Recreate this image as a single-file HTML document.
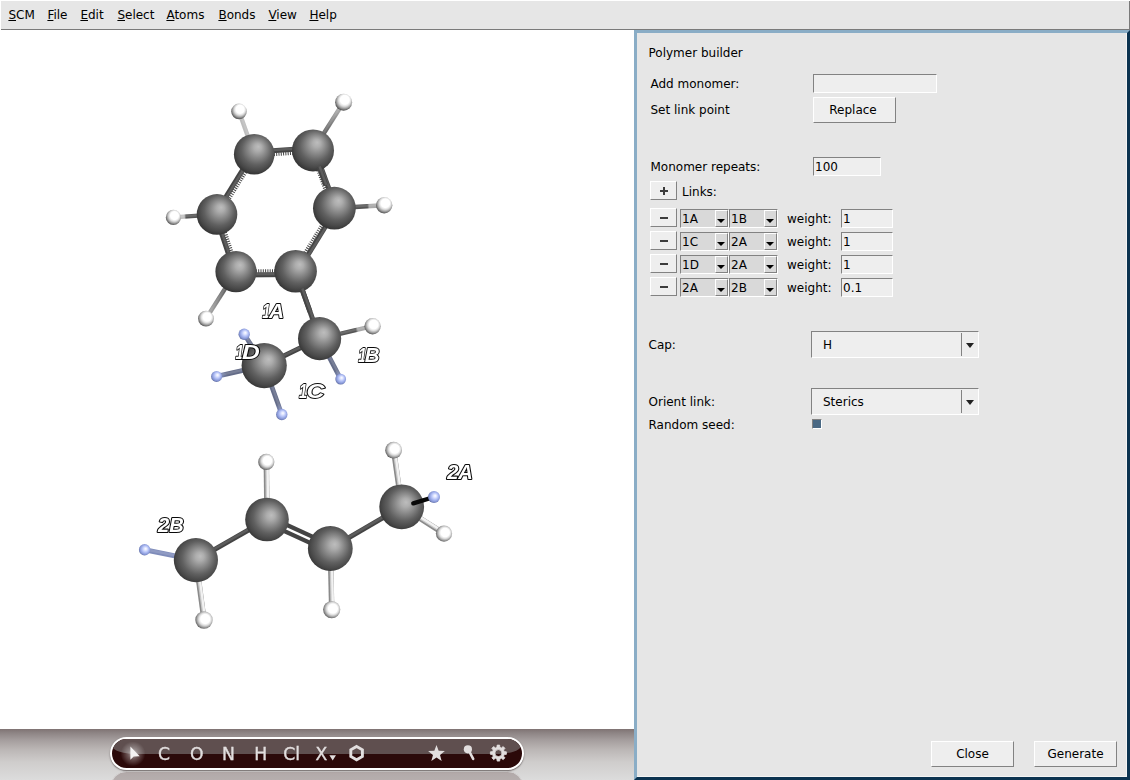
<!DOCTYPE html><html><head><meta charset="utf-8"><title>Polymer builder</title><style>
*{box-sizing:border-box;margin:0;padding:0}
html,body{width:1130px;height:780px;overflow:hidden;background:#fff}
body{position:relative;font-family:"DejaVu Sans","Liberation Sans",sans-serif;font-size:12px;color:#000}
.abs{position:absolute}
#menubar{left:1px;top:1px;width:1129px;height:29px;background:#e6e6e6;border-bottom:1px solid #7a7a7a;border-right:1px solid #7a7a7a}
#menubar span{position:absolute;top:7px;line-height:14px;white-space:nowrap}
#menubar u{text-decoration:underline;text-underline-offset:1px}
#panel{left:634px;top:30px;width:496px;height:750px;background:#e6e6e6;border-style:solid;border-width:3px;border-color:#8aadc6 #0c3350 #0c3350 #8aadc6}
#panel:after{content:"";position:absolute;left:0;top:0;right:0;bottom:0;border-right:1px solid #f4f4f4;border-bottom:1px solid #f4f4f4}
.lbl{position:absolute;white-space:nowrap;line-height:14px}
.entry{position:absolute;background:#eeeeee;border:1px solid;border-color:#828282 #fff #fff #828282;line-height:14px;white-space:nowrap;overflow:hidden}
.btn{position:absolute;background:#eeeeee;border:1px solid;border-color:#fff #828282 #828282 #fff;text-align:center;white-space:nowrap}
.cb{position:absolute;background:#d9d9d9;border:1px solid;border-color:#828282 #fff #fff #828282;height:19px;line-height:14px;white-space:nowrap}
.cb .t{position:absolute;left:1px;top:2px}
.cb .ar{position:absolute;right:0;top:0;width:13px;height:17px;background:#d9d9d9;border:1px solid;border-color:#fff #828282 #828282 #fff}
.cb .ar:before{content:"";position:absolute;left:1px;top:8px;border:4px solid transparent;border-top:4.5px solid #000;border-bottom:none}
.pm{position:absolute;background:#3c3c3c}
.opt{position:absolute;background:#eeeeee;border:1px solid;border-color:#828282 #fff #fff #828282;width:168px;height:27px;line-height:14px}
.opt .t{position:absolute;left:11px;top:6px}
.opt .dv{position:absolute;left:149px;top:1px;width:1px;height:23px;background:#828282}
.opt .tr{position:absolute;left:154px;top:11px;border:4px solid transparent;border-top:5px solid #222;border-bottom:none}
#bar{left:0;top:729px;width:634px;height:51px;background:linear-gradient(#7f7373 0,#8e8585 8%,#a59e9e 22%,#bbb6b5 40%,#cfcdcc 65%,#dcdcdc 100%)}
#pill{left:110px;top:736.5px;width:414px;height:33.5px;border-radius:17px;border:2.5px solid #fff;background:#2b0909;overflow:hidden;box-shadow:0 1px 1.5px rgba(40,30,30,.6)}
#pill .gl{position:absolute;left:0;top:-10px;width:409px;height:25.2px;background:#5f4f4f;border-radius:0 0 26px 26px/0 0 8px 8px}
#refl{left:110px;top:770.5px;width:414px;height:33.5px;border-radius:17px;border:1.5px solid #cfc6c6;background:#32100f;opacity:.22}
</style></head><body>
<div id="menubar" class="abs">
<span style="left:7.4px"><u>S</u>CM</span>
<span style="left:46.4px"><u>F</u>ile</span>
<span style="left:79.4px"><u>E</u>dit</span>
<span style="left:116.4px"><u>S</u>elect</span>
<span style="left:165.4px"><u>A</u>toms</span>
<span style="left:217.4px"><u>B</u>onds</span>
<span style="left:267.4px"><u>V</u>iew</span>
<span style="left:308.4px"><u>H</u>elp</span>
</div>
<svg width="634" height="699" viewBox="0 30 634 699" style="position:absolute;left:0;top:30px;will-change:transform" stroke-linecap="butt">
<line x1="271.6" y1="154.6" x2="295.1" y2="153.1" stroke="#444" stroke-width="3.4" stroke-dasharray="1.0 1.3"/>
<line x1="247.0" y1="170.1" x2="228.0" y2="200.8" stroke="#444" stroke-width="3.4" stroke-dasharray="1.0 1.3"/>
<line x1="224.5" y1="230.1" x2="232.5" y2="254.2" stroke="#444" stroke-width="3.4" stroke-dasharray="1.0 1.3"/>
<line x1="253.6" y1="271.0" x2="277.3" y2="270.8" stroke="#444" stroke-width="3.4" stroke-dasharray="1.0 1.3"/>
<line x1="303.7" y1="254.7" x2="323.2" y2="222.9" stroke="#444" stroke-width="3.4" stroke-dasharray="1.0 1.3"/>
<line x1="317.2" y1="168.0" x2="325.9" y2="191.7" stroke="#444" stroke-width="3.4" stroke-dasharray="1.0 1.3"/>
<g transform="translate(-0.15,-2.30)"><line x1="254.2" y1="154.2" x2="313.0" y2="150.4" stroke="#444" stroke-width="5.0"/><line x1="254.2" y1="153.6" x2="313.0" y2="149.8" stroke="#fff" stroke-opacity="0.13" stroke-width="2.5"/></g>
<g transform="translate(-1.36,-0.84)"><line x1="254.2" y1="154.2" x2="217.0" y2="214.4" stroke="#444" stroke-width="5.0"/><line x1="254.7" y1="154.5" x2="217.5" y2="214.7" stroke="#fff" stroke-opacity="0.13" stroke-width="2.5"/></g>
<g transform="translate(-1.52,0.50)"><line x1="217.0" y1="214.4" x2="236.0" y2="271.6" stroke="#444" stroke-width="5.0"/><line x1="217.6" y1="214.2" x2="236.6" y2="271.4" stroke="#fff" stroke-opacity="0.13" stroke-width="2.5"/></g>
<g transform="translate(0.02,3.30)"><line x1="236.0" y1="271.6" x2="295.6" y2="271.2" stroke="#444" stroke-width="5.0"/><line x1="236.0" y1="271.0" x2="295.6" y2="270.6" stroke="#fff" stroke-opacity="0.13" stroke-width="2.5"/></g>
<g transform="translate(1.70,1.05)"><line x1="295.6" y1="271.2" x2="334.4" y2="208.2" stroke="#444" stroke-width="5.0"/><line x1="296.1" y1="271.5" x2="334.9" y2="208.5" stroke="#fff" stroke-opacity="0.13" stroke-width="2.5"/></g>
<g transform="translate(1.50,-0.56)"><line x1="313.0" y1="150.4" x2="334.4" y2="208.2" stroke="#444" stroke-width="5.0"/><line x1="313.6" y1="150.2" x2="335.0" y2="208.0" stroke="#fff" stroke-opacity="0.13" stroke-width="2.5"/></g>
<line x1="295.6" y1="271.2" x2="319.6" y2="338.6" stroke="#444" stroke-width="5.0"/><line x1="296.2" y1="271.0" x2="320.2" y2="338.4" stroke="#fff" stroke-opacity="0.13" stroke-width="2.5"/>
<line x1="319.6" y1="338.6" x2="264.2" y2="365.6" stroke="#444" stroke-width="5.0"/><line x1="319.3" y1="338.1" x2="263.9" y2="365.1" stroke="#fff" stroke-opacity="0.13" stroke-width="2.5"/>
<linearGradient id="lg1" gradientUnits="userSpaceOnUse" x1="254.2" y1="154.2" x2="239.0" y2="111.4"><stop offset="0.3" stop-color="#555"/><stop offset="0.33999999999999997" stop-color="#bdbdbd"/></linearGradient><line x1="254.2" y1="154.2" x2="239.0" y2="111.4" stroke="url(#lg1)" stroke-width="4.4"/><line x1="254.7" y1="154.0" x2="239.5" y2="111.2" stroke="#fff" stroke-opacity="0.13" stroke-width="2.2"/>
<linearGradient id="lg2" gradientUnits="userSpaceOnUse" x1="313.0" y1="150.4" x2="343.6" y2="102.2"><stop offset="0.4" stop-color="#666"/><stop offset="0.8" stop-color="#a2a2a2"/></linearGradient><line x1="313.0" y1="150.4" x2="343.6" y2="102.2" stroke="url(#lg2)" stroke-width="4.4"/><line x1="312.6" y1="150.1" x2="343.2" y2="101.9" stroke="#fff" stroke-opacity="0.13" stroke-width="2.2"/>
<linearGradient id="lg3" gradientUnits="userSpaceOnUse" x1="217.0" y1="214.4" x2="173.4" y2="217.4"><stop offset="0.71" stop-color="#555"/><stop offset="0.75" stop-color="#c0c0c0"/></linearGradient><line x1="217.0" y1="214.4" x2="173.4" y2="217.4" stroke="url(#lg3)" stroke-width="4.4"/><line x1="217.0" y1="213.9" x2="173.4" y2="216.9" stroke="#fff" stroke-opacity="0.13" stroke-width="2.2"/>
<linearGradient id="lg4" gradientUnits="userSpaceOnUse" x1="334.4" y1="208.2" x2="384.2" y2="205.2"><stop offset="0.66" stop-color="#555"/><stop offset="0.7000000000000001" stop-color="#a8a8a8"/></linearGradient><line x1="334.4" y1="208.2" x2="384.2" y2="205.2" stroke="url(#lg4)" stroke-width="4.4"/><line x1="334.4" y1="207.7" x2="384.2" y2="204.7" stroke="#fff" stroke-opacity="0.13" stroke-width="2.2"/>
<linearGradient id="lg5" gradientUnits="userSpaceOnUse" x1="236.0" y1="271.6" x2="206.0" y2="318.6"><stop offset="0.4" stop-color="#666"/><stop offset="0.8" stop-color="#9c9c9c"/></linearGradient><line x1="236.0" y1="271.6" x2="206.0" y2="318.6" stroke="url(#lg5)" stroke-width="4.4"/><line x1="235.6" y1="271.3" x2="205.6" y2="318.3" stroke="#fff" stroke-opacity="0.13" stroke-width="2.2"/>
<linearGradient id="lg6" gradientUnits="userSpaceOnUse" x1="319.6" y1="338.6" x2="372.6" y2="326.2"><stop offset="0.68" stop-color="#555"/><stop offset="0.7200000000000001" stop-color="#a8a8a8"/></linearGradient><line x1="319.6" y1="338.6" x2="372.6" y2="326.2" stroke="url(#lg6)" stroke-width="4.4"/><line x1="319.5" y1="338.1" x2="372.5" y2="325.7" stroke="#fff" stroke-opacity="0.13" stroke-width="2.2"/>
<linearGradient id="lg7" gradientUnits="userSpaceOnUse" x1="264.2" y1="365.6" x2="244.2" y2="334.3"><stop offset="0.78" stop-color="#646c88"/><stop offset="0.93" stop-color="#7f8cba"/></linearGradient><line x1="264.2" y1="365.6" x2="244.2" y2="334.3" stroke="url(#lg7)" stroke-width="4.8"/><line x1="264.7" y1="365.3" x2="244.7" y2="334.0" stroke="#fff" stroke-opacity="0.13" stroke-width="2.4"/>
<linearGradient id="lg8" gradientUnits="userSpaceOnUse" x1="264.2" y1="365.6" x2="216.6" y2="376.4"><stop offset="0.78" stop-color="#646c88"/><stop offset="0.93" stop-color="#7f8cba"/></linearGradient><line x1="264.2" y1="365.6" x2="216.6" y2="376.4" stroke="url(#lg8)" stroke-width="4.8"/><line x1="264.1" y1="365.0" x2="216.5" y2="375.8" stroke="#fff" stroke-opacity="0.13" stroke-width="2.4"/>
<linearGradient id="lg9" gradientUnits="userSpaceOnUse" x1="264.2" y1="365.6" x2="281.8" y2="414.5"><stop offset="0.78" stop-color="#646c88"/><stop offset="0.93" stop-color="#7f8cba"/></linearGradient><line x1="264.2" y1="365.6" x2="281.8" y2="414.5" stroke="url(#lg9)" stroke-width="4.8"/><line x1="264.7" y1="365.4" x2="282.3" y2="414.3" stroke="#fff" stroke-opacity="0.13" stroke-width="2.4"/>
<linearGradient id="lg10" gradientUnits="userSpaceOnUse" x1="319.6" y1="338.6" x2="340.7" y2="379.1"><stop offset="0.78" stop-color="#646c88"/><stop offset="0.93" stop-color="#7f8cba"/></linearGradient><line x1="319.6" y1="338.6" x2="340.7" y2="379.1" stroke="url(#lg10)" stroke-width="4.8"/><line x1="320.1" y1="338.3" x2="341.2" y2="378.8" stroke="#fff" stroke-opacity="0.13" stroke-width="2.4"/>
<line x1="195.9" y1="560.1" x2="267.0" y2="519.5" stroke="#444" stroke-width="5.0"/><line x1="195.6" y1="559.6" x2="266.7" y2="519.0" stroke="#fff" stroke-opacity="0.13" stroke-width="2.5"/>
<line x1="330.3" y1="548.5" x2="401.7" y2="506.8" stroke="#444" stroke-width="5.0"/><line x1="330.0" y1="548.0" x2="401.4" y2="506.3" stroke="#fff" stroke-opacity="0.13" stroke-width="2.5"/>
<line x1="268.4" y1="516.5" x2="331.7" y2="545.5" stroke="#444" stroke-width="4.2"/>
<line x1="265.6" y1="522.5" x2="328.9" y2="551.5" stroke="#444" stroke-width="4.2"/>
<line x1="267.0" y1="519.5" x2="266.3" y2="461.9" stroke="#8a8a8a" stroke-width="5.4"/>
<line x1="267.7" y1="519.5" x2="267.0" y2="461.9" stroke="#c8c8c8" stroke-width="3.6"/>
<line x1="268.3" y1="519.5" x2="267.6" y2="461.9" stroke="#f2f2f2" stroke-width="2.2"/>
<line x1="195.9" y1="560.1" x2="204.0" y2="620.0" stroke="#8a8a8a" stroke-width="5.4"/>
<line x1="196.6" y1="560.0" x2="204.7" y2="619.9" stroke="#c8c8c8" stroke-width="3.6"/>
<line x1="197.2" y1="559.9" x2="205.3" y2="619.8" stroke="#f2f2f2" stroke-width="2.2"/>
<line x1="330.3" y1="548.5" x2="331.7" y2="609.6" stroke="#8a8a8a" stroke-width="5.4"/>
<line x1="331.0" y1="548.5" x2="332.4" y2="609.6" stroke="#c8c8c8" stroke-width="3.6"/>
<line x1="331.6" y1="548.5" x2="333.0" y2="609.6" stroke="#f2f2f2" stroke-width="2.2"/>
<line x1="401.7" y1="506.8" x2="393.6" y2="450.2" stroke="#8a8a8a" stroke-width="5.4"/>
<line x1="402.4" y1="506.7" x2="394.3" y2="450.1" stroke="#c8c8c8" stroke-width="3.6"/>
<line x1="403.0" y1="506.6" x2="394.9" y2="450.0" stroke="#f2f2f2" stroke-width="2.2"/>
<line x1="401.7" y1="506.8" x2="444.0" y2="533.6" stroke="#8a8a8a" stroke-width="5.4"/>
<line x1="402.1" y1="506.2" x2="444.4" y2="533.0" stroke="#c8c8c8" stroke-width="3.6"/>
<line x1="402.4" y1="505.7" x2="444.7" y2="532.5" stroke="#f2f2f2" stroke-width="2.2"/>
<line x1="195.9" y1="560.1" x2="144.6" y2="549.8" stroke="#7f8cba" stroke-width="5.0"/><line x1="196.0" y1="559.5" x2="144.7" y2="549.2" stroke="#fff" stroke-opacity="0.13" stroke-width="2.5"/>
<radialGradient id="s16" cx="0.535" cy="0.436" r="0.6" fx="0.600" fy="0.300"><stop offset="0" stop-color="#fff"/><stop offset="0.44" stop-color="#fff"/><stop offset="0.6" stop-color="#dedede"/><stop offset="0.76" stop-color="#a4a4a4"/><stop offset="0.9" stop-color="#666"/><stop offset="1" stop-color="#383838"/></radialGradient><circle cx="239.0" cy="111.4" r="7.8" fill="url(#s16)"/>
<radialGradient id="s17" cx="0.535" cy="0.435" r="0.6" fx="0.600" fy="0.298"><stop offset="0" stop-color="#fff"/><stop offset="0.44" stop-color="#fff"/><stop offset="0.6" stop-color="#dedede"/><stop offset="0.76" stop-color="#a4a4a4"/><stop offset="0.9" stop-color="#666"/><stop offset="1" stop-color="#383838"/></radialGradient><circle cx="343.6" cy="102.2" r="8.5" fill="url(#s17)"/>
<radialGradient id="s18" cx="0.535" cy="0.444" r="0.6" fx="0.600" fy="0.326"><stop offset="0" stop-color="#fff"/><stop offset="0.44" stop-color="#fff"/><stop offset="0.6" stop-color="#dedede"/><stop offset="0.76" stop-color="#a4a4a4"/><stop offset="0.9" stop-color="#666"/><stop offset="1" stop-color="#383838"/></radialGradient><circle cx="173.4" cy="217.4" r="7.6" fill="url(#s18)"/>
<radialGradient id="s19" cx="0.535" cy="0.443" r="0.6" fx="0.600" fy="0.323"><stop offset="0" stop-color="#fff"/><stop offset="0.44" stop-color="#fff"/><stop offset="0.6" stop-color="#dedede"/><stop offset="0.76" stop-color="#a4a4a4"/><stop offset="0.9" stop-color="#666"/><stop offset="1" stop-color="#383838"/></radialGradient><circle cx="384.2" cy="205.2" r="8.2" fill="url(#s19)"/>
<radialGradient id="s20" cx="0.535" cy="0.453" r="0.6" fx="0.600" fy="0.352"><stop offset="0" stop-color="#fff"/><stop offset="0.44" stop-color="#fff"/><stop offset="0.6" stop-color="#dedede"/><stop offset="0.76" stop-color="#a4a4a4"/><stop offset="0.9" stop-color="#666"/><stop offset="1" stop-color="#383838"/></radialGradient><circle cx="206.0" cy="318.6" r="7.9" fill="url(#s20)"/>
<radialGradient id="s21" cx="0.535" cy="0.453" r="0.6" fx="0.600" fy="0.354"><stop offset="0" stop-color="#fff"/><stop offset="0.44" stop-color="#fff"/><stop offset="0.6" stop-color="#dedede"/><stop offset="0.76" stop-color="#a4a4a4"/><stop offset="0.9" stop-color="#666"/><stop offset="1" stop-color="#383838"/></radialGradient><circle cx="372.6" cy="326.2" r="8.2" fill="url(#s21)"/>
<radialGradient id="s22" cx="0.535" cy="0.454" r="0.6" fx="0.600" fy="0.356"><stop offset="0" stop-color="#fff"/><stop offset="0.22" stop-color="#dfe5ff"/><stop offset="0.5" stop-color="#aebcf4"/><stop offset="0.78" stop-color="#8393d2"/><stop offset="1" stop-color="#4f5b8a"/></radialGradient><circle cx="244.2" cy="334.3" r="5.7" fill="url(#s22)"/>
<radialGradient id="s23" cx="0.535" cy="0.457" r="0.6" fx="0.600" fy="0.366"><stop offset="0" stop-color="#fff"/><stop offset="0.22" stop-color="#dfe5ff"/><stop offset="0.5" stop-color="#aebcf4"/><stop offset="0.78" stop-color="#8393d2"/><stop offset="1" stop-color="#4f5b8a"/></radialGradient><circle cx="216.6" cy="376.4" r="5.5" fill="url(#s23)"/>
<radialGradient id="s24" cx="0.535" cy="0.460" r="0.6" fx="0.600" fy="0.376"><stop offset="0" stop-color="#fff"/><stop offset="0.22" stop-color="#dfe5ff"/><stop offset="0.5" stop-color="#aebcf4"/><stop offset="0.78" stop-color="#8393d2"/><stop offset="1" stop-color="#4f5b8a"/></radialGradient><circle cx="281.8" cy="414.5" r="5.7" fill="url(#s24)"/>
<radialGradient id="s25" cx="0.535" cy="0.457" r="0.6" fx="0.600" fy="0.367"><stop offset="0" stop-color="#fff"/><stop offset="0.22" stop-color="#dfe5ff"/><stop offset="0.5" stop-color="#aebcf4"/><stop offset="0.78" stop-color="#8393d2"/><stop offset="1" stop-color="#4f5b8a"/></radialGradient><circle cx="340.7" cy="379.1" r="5.4" fill="url(#s25)"/>
<radialGradient id="s26" cx="0.535" cy="0.439" r="0.6" fx="0.600" fy="0.311"><stop offset="0" stop-color="#bdbdbd"/><stop offset="0.16" stop-color="#adadad"/><stop offset="0.38" stop-color="#888"/><stop offset="0.62" stop-color="#606060"/><stop offset="0.82" stop-color="#484848"/><stop offset="1" stop-color="#2c2c2c"/></radialGradient><circle cx="254.2" cy="154.2" r="20.3" fill="url(#s26)"/>
<radialGradient id="s27" cx="0.535" cy="0.439" r="0.6" fx="0.600" fy="0.310"><stop offset="0" stop-color="#bdbdbd"/><stop offset="0.16" stop-color="#adadad"/><stop offset="0.38" stop-color="#888"/><stop offset="0.62" stop-color="#606060"/><stop offset="0.82" stop-color="#484848"/><stop offset="1" stop-color="#2c2c2c"/></radialGradient><circle cx="313.0" cy="150.4" r="21.0" fill="url(#s27)"/>
<radialGradient id="s28" cx="0.535" cy="0.444" r="0.6" fx="0.600" fy="0.326"><stop offset="0" stop-color="#bdbdbd"/><stop offset="0.16" stop-color="#adadad"/><stop offset="0.38" stop-color="#888"/><stop offset="0.62" stop-color="#606060"/><stop offset="0.82" stop-color="#484848"/><stop offset="1" stop-color="#2c2c2c"/></radialGradient><circle cx="217.0" cy="214.4" r="20.3" fill="url(#s28)"/>
<radialGradient id="s29" cx="0.535" cy="0.444" r="0.6" fx="0.600" fy="0.324"><stop offset="0" stop-color="#bdbdbd"/><stop offset="0.16" stop-color="#adadad"/><stop offset="0.38" stop-color="#888"/><stop offset="0.62" stop-color="#606060"/><stop offset="0.82" stop-color="#484848"/><stop offset="1" stop-color="#2c2c2c"/></radialGradient><circle cx="334.4" cy="208.2" r="21.4" fill="url(#s29)"/>
<radialGradient id="s30" cx="0.535" cy="0.449" r="0.6" fx="0.600" fy="0.340"><stop offset="0" stop-color="#bdbdbd"/><stop offset="0.16" stop-color="#adadad"/><stop offset="0.38" stop-color="#888"/><stop offset="0.62" stop-color="#606060"/><stop offset="0.82" stop-color="#484848"/><stop offset="1" stop-color="#2c2c2c"/></radialGradient><circle cx="236.0" cy="271.6" r="20.6" fill="url(#s30)"/>
<radialGradient id="s31" cx="0.535" cy="0.449" r="0.6" fx="0.600" fy="0.340"><stop offset="0" stop-color="#bdbdbd"/><stop offset="0.16" stop-color="#adadad"/><stop offset="0.38" stop-color="#888"/><stop offset="0.62" stop-color="#606060"/><stop offset="0.82" stop-color="#484848"/><stop offset="1" stop-color="#2c2c2c"/></radialGradient><circle cx="295.6" cy="271.2" r="21.3" fill="url(#s31)"/>
<radialGradient id="s32" cx="0.535" cy="0.454" r="0.6" fx="0.600" fy="0.357"><stop offset="0" stop-color="#bdbdbd"/><stop offset="0.16" stop-color="#adadad"/><stop offset="0.38" stop-color="#888"/><stop offset="0.62" stop-color="#606060"/><stop offset="0.82" stop-color="#484848"/><stop offset="1" stop-color="#2c2c2c"/></radialGradient><circle cx="319.6" cy="338.6" r="21.6" fill="url(#s32)"/>
<radialGradient id="s33" cx="0.535" cy="0.456" r="0.6" fx="0.600" fy="0.363"><stop offset="0" stop-color="#bdbdbd"/><stop offset="0.16" stop-color="#adadad"/><stop offset="0.38" stop-color="#888"/><stop offset="0.62" stop-color="#606060"/><stop offset="0.82" stop-color="#484848"/><stop offset="1" stop-color="#2c2c2c"/></radialGradient><circle cx="264.2" cy="365.6" r="22.6" fill="url(#s33)"/>
<radialGradient id="s34" cx="0.535" cy="0.473" r="0.6" fx="0.600" fy="0.417"><stop offset="0" stop-color="#fff"/><stop offset="0.44" stop-color="#fff"/><stop offset="0.6" stop-color="#dedede"/><stop offset="0.76" stop-color="#a4a4a4"/><stop offset="0.9" stop-color="#666"/><stop offset="1" stop-color="#383838"/></radialGradient><circle cx="204.0" cy="620.0" r="8.7" fill="url(#s34)"/>
<radialGradient id="s35" cx="0.535" cy="0.464" r="0.6" fx="0.600" fy="0.387"><stop offset="0" stop-color="#fff"/><stop offset="0.44" stop-color="#fff"/><stop offset="0.6" stop-color="#dedede"/><stop offset="0.76" stop-color="#a4a4a4"/><stop offset="0.9" stop-color="#666"/><stop offset="1" stop-color="#383838"/></radialGradient><circle cx="266.3" cy="461.9" r="8.1" fill="url(#s35)"/>
<radialGradient id="s36" cx="0.535" cy="0.473" r="0.6" fx="0.600" fy="0.417"><stop offset="0" stop-color="#fff"/><stop offset="0.44" stop-color="#fff"/><stop offset="0.6" stop-color="#dedede"/><stop offset="0.76" stop-color="#a4a4a4"/><stop offset="0.9" stop-color="#666"/><stop offset="1" stop-color="#383838"/></radialGradient><circle cx="331.7" cy="609.6" r="8.6" fill="url(#s36)"/>
<radialGradient id="s37" cx="0.535" cy="0.463" r="0.6" fx="0.600" fy="0.385"><stop offset="0" stop-color="#fff"/><stop offset="0.44" stop-color="#fff"/><stop offset="0.6" stop-color="#dedede"/><stop offset="0.76" stop-color="#a4a4a4"/><stop offset="0.9" stop-color="#666"/><stop offset="1" stop-color="#383838"/></radialGradient><circle cx="393.6" cy="450.2" r="8.4" fill="url(#s37)"/>
<radialGradient id="s38" cx="0.535" cy="0.470" r="0.6" fx="0.600" fy="0.405"><stop offset="0" stop-color="#fff"/><stop offset="0.44" stop-color="#fff"/><stop offset="0.6" stop-color="#dedede"/><stop offset="0.76" stop-color="#a4a4a4"/><stop offset="0.9" stop-color="#666"/><stop offset="1" stop-color="#383838"/></radialGradient><circle cx="444.0" cy="533.6" r="8.1" fill="url(#s38)"/>
<radialGradient id="s39" cx="0.535" cy="0.471" r="0.6" fx="0.600" fy="0.409"><stop offset="0" stop-color="#fff"/><stop offset="0.22" stop-color="#dfe5ff"/><stop offset="0.5" stop-color="#aebcf4"/><stop offset="0.78" stop-color="#8393d2"/><stop offset="1" stop-color="#4f5b8a"/></radialGradient><circle cx="144.6" cy="549.8" r="5.7" fill="url(#s39)"/>
<radialGradient id="s40" cx="0.535" cy="0.472" r="0.6" fx="0.600" fy="0.412"><stop offset="0" stop-color="#bdbdbd"/><stop offset="0.16" stop-color="#adadad"/><stop offset="0.38" stop-color="#888"/><stop offset="0.62" stop-color="#606060"/><stop offset="0.82" stop-color="#484848"/><stop offset="1" stop-color="#2c2c2c"/></radialGradient><circle cx="195.9" cy="560.1" r="22.1" fill="url(#s40)"/>
<radialGradient id="s41" cx="0.535" cy="0.469" r="0.6" fx="0.600" fy="0.402"><stop offset="0" stop-color="#bdbdbd"/><stop offset="0.16" stop-color="#adadad"/><stop offset="0.38" stop-color="#888"/><stop offset="0.62" stop-color="#606060"/><stop offset="0.82" stop-color="#484848"/><stop offset="1" stop-color="#2c2c2c"/></radialGradient><circle cx="267.0" cy="519.5" r="21.8" fill="url(#s41)"/>
<radialGradient id="s42" cx="0.535" cy="0.471" r="0.6" fx="0.600" fy="0.409"><stop offset="0" stop-color="#bdbdbd"/><stop offset="0.16" stop-color="#adadad"/><stop offset="0.38" stop-color="#888"/><stop offset="0.62" stop-color="#606060"/><stop offset="0.82" stop-color="#484848"/><stop offset="1" stop-color="#2c2c2c"/></radialGradient><circle cx="330.3" cy="548.5" r="22.4" fill="url(#s42)"/>
<radialGradient id="s43" cx="0.535" cy="0.468" r="0.6" fx="0.600" fy="0.399"><stop offset="0" stop-color="#bdbdbd"/><stop offset="0.16" stop-color="#adadad"/><stop offset="0.38" stop-color="#888"/><stop offset="0.62" stop-color="#606060"/><stop offset="0.82" stop-color="#484848"/><stop offset="1" stop-color="#2c2c2c"/></radialGradient><circle cx="401.7" cy="506.8" r="22.4" fill="url(#s43)"/>
<line x1="319.0" y1="166.6" x2="325.8" y2="185.1" stroke="#444" stroke-width="5.0"/><line x1="319.6" y1="166.4" x2="326.4" y2="184.9" stroke="#fff" stroke-opacity="0.13" stroke-width="2.5"/>
<line x1="301.8" y1="288.7" x2="310.0" y2="311.6" stroke="#444" stroke-width="5.0"/><line x1="302.4" y1="288.5" x2="310.6" y2="311.4" stroke="#fff" stroke-opacity="0.13" stroke-width="2.5"/>
<g stroke-linecap="round"><line x1="413.3" y1="503.3" x2="432.4" y2="497.5" stroke="#080808" stroke-width="4.4"/></g>
<radialGradient id="s44" cx="0.535" cy="0.467" r="0.6" fx="0.600" fy="0.396"><stop offset="0" stop-color="#fff"/><stop offset="0.22" stop-color="#dfe5ff"/><stop offset="0.5" stop-color="#aebcf4"/><stop offset="0.78" stop-color="#8393d2"/><stop offset="1" stop-color="#4f5b8a"/></radialGradient><circle cx="434.0" cy="497.0" r="6.0" fill="url(#s44)"/>
<g font-family="'Liberation Sans',sans-serif" font-style="italic" font-weight="bold" fill="#fff" stroke="#0a0a0a" stroke-width="1.9" stroke-linejoin="round" paint-order="stroke fill">
<text transform="translate(262.2,317.8) scale(0.72,1)" font-size="20.5">1</text><text transform="translate(269.09999999999997,317.8) scale(1.02,1)" font-size="20.5">A</text>
<text transform="translate(235.4,359.2) scale(0.72,1)" font-size="20.5">1</text><text transform="translate(242.0,359.2) scale(1.2,1)" font-size="20.5">D</text>
<text transform="translate(358.2,362.0) scale(0.72,1)" font-size="20.5">1</text><text transform="translate(364.8,362.0) scale(1.0,1)" font-size="20.5">B</text>
<text transform="translate(299.0,397.8) scale(0.72,1)" font-size="20.5">1</text><text transform="translate(306.6,397.8) scale(1.22,1)" font-size="20.5">C</text>
<g stroke-width="2.2"><text transform="translate(158.0,532.4) scale(0.98,1)" font-size="20.5">2B</text>
<text transform="translate(447.2,479.0) scale(0.98,1)" font-size="20.5">2A</text></g>
</g></svg>
<div id="bar" class="abs"></div>
<div id="refl" class="abs"></div>
<div id="pill" class="abs"><div class="gl"></div></div>
<svg width="634" height="51" viewBox="0 729 634 51" style="position:absolute;left:0;top:729px;will-change:transform">
<defs><radialGradient id="glow"><stop offset="0" stop-color="#fff" stop-opacity=".7"/><stop offset=".4" stop-color="#fff" stop-opacity=".32"/><stop offset="1" stop-color="#fff" stop-opacity="0"/></radialGradient></defs>
<circle cx="133" cy="753.8" r="12.5" fill="url(#glow)"/>
<g fill="#e2dede">
<path d="M130.4,746.6 L130.4,759.8 L133.7,756.5 L139.7,756.3 Z" fill="#f4f2f2"/>
<g font-family="'DejaVu Sans','Liberation Sans',sans-serif" font-size="17.2" stroke="#e2dede" stroke-width="0.35">
<text x="158.0" y="759.6">C</text>
<text x="189.9" y="759.6">O</text>
<text x="222.0" y="759.6">N</text>
<text x="254.2" y="759.6">H</text>
<text x="283.3" y="759.6">Cl</text>
<text x="315.4" y="759.6">X</text>
</g>
<polygon points="329.4,755.2 336,755.2 332.7,760.4"/>
<polygon points="356.60,746.40 362.40,749.75 362.40,756.45 356.60,759.80 350.80,756.45 350.80,749.75" fill="none" stroke="#e2dede" stroke-width="2.9" stroke-linejoin="miter"/>
<polygon points="436.50,745.00 438.67,750.81 444.87,751.08 440.02,754.94 441.67,760.92 436.50,757.50 431.33,760.92 432.98,754.94 428.13,751.08 434.33,750.81"/>
<circle cx="467.9" cy="749.3" r="4.1"/><line x1="468.5" y1="750" x2="473.2" y2="758.8" stroke="#e2dede" stroke-width="2.6" stroke-linecap="round"/>
<path d="M504.21,751.61 L506.40,751.83 L506.40,754.37 L504.21,754.59 L503.56,756.15 L504.95,757.86 L503.16,759.65 L501.45,758.26 L499.89,758.91 L499.67,761.10 L497.13,761.10 L496.91,758.91 L495.35,758.26 L493.64,759.65 L491.85,757.86 L493.24,756.15 L492.59,754.59 L490.40,754.37 L490.40,751.83 L492.59,751.61 L493.24,750.05 L491.85,748.34 L493.64,746.55 L495.35,747.94 L496.91,747.29 L497.13,745.10 L499.67,745.10 L499.89,747.29 L501.45,747.94 L503.16,746.55 L504.95,748.34 L503.56,750.05Z M501.9,753.1 A3.5,3.5 0 1 0 494.9,753.1 A3.5,3.5 0 1 0 501.9,753.1Z" fill-rule="evenodd" stroke="#e2dede" stroke-width="0.8" stroke-linejoin="round"/>
</g></svg>
<div id="panel" class="abs"></div>
<div class="lbl" style="left:648.5px;top:46px">Polymer builder</div>
<div class="lbl" style="left:650.5px;top:77px">Add monomer:</div>
<div class="entry" style="left:813px;top:74px;width:124px;height:19px"></div>
<div class="lbl" style="left:650.5px;top:103px">Set link point</div>
<div class="btn" style="left:813px;top:97px;width:83px;height:26px;line-height:24px;padding-right:3px">Replace</div>
<div class="lbl" style="left:650.5px;top:160px">Monomer repeats:</div>
<div class="entry" style="left:813px;top:157px;width:68px;height:19px;padding:2px 0 0 1px">100</div>
<div class="btn" style="left:650px;top:181px;width:27px;height:19px"></div><i class="pm" style="left:660px;top:190px;width:8px;height:2px"></i><i class="pm" style="left:663px;top:187px;width:2px;height:8px"></i>
<div class="lbl" style="left:682px;top:185px">Links:</div>
<div class="btn" style="left:650px;top:208px;width:27px;height:19px"></div><i class="pm" style="left:660px;top:217px;width:8px;height:2px"></i>
<div class="cb" style="left:680px;top:209px;width:49px"><span class="t">1A</span><span class="ar"></span></div>
<div class="cb" style="left:729px;top:209px;width:49px"><span class="t">1B</span><span class="ar"></span></div>
<div class="lbl" style="left:787px;top:212px">weight:</div>
<div class="entry" style="left:841px;top:209px;width:52px;height:19px;padding:2px 0 0 1px">1</div>
<div class="btn" style="left:650px;top:231px;width:27px;height:19px"></div><i class="pm" style="left:660px;top:240px;width:8px;height:2px"></i>
<div class="cb" style="left:680px;top:232px;width:49px"><span class="t">1C</span><span class="ar"></span></div>
<div class="cb" style="left:729px;top:232px;width:49px"><span class="t">2A</span><span class="ar"></span></div>
<div class="lbl" style="left:787px;top:235px">weight:</div>
<div class="entry" style="left:841px;top:232px;width:52px;height:19px;padding:2px 0 0 1px">1</div>
<div class="btn" style="left:650px;top:254px;width:27px;height:19px"></div><i class="pm" style="left:660px;top:263px;width:8px;height:2px"></i>
<div class="cb" style="left:680px;top:255px;width:49px"><span class="t">1D</span><span class="ar"></span></div>
<div class="cb" style="left:729px;top:255px;width:49px"><span class="t">2A</span><span class="ar"></span></div>
<div class="lbl" style="left:787px;top:258px">weight:</div>
<div class="entry" style="left:841px;top:255px;width:52px;height:19px;padding:2px 0 0 1px">1</div>
<div class="btn" style="left:650px;top:277px;width:27px;height:19px"></div><i class="pm" style="left:660px;top:286px;width:8px;height:2px"></i>
<div class="cb" style="left:680px;top:278px;width:49px"><span class="t">2A</span><span class="ar"></span></div>
<div class="cb" style="left:729px;top:278px;width:49px"><span class="t">2B</span><span class="ar"></span></div>
<div class="lbl" style="left:787px;top:281px">weight:</div>
<div class="entry" style="left:841px;top:278px;width:52px;height:19px;padding:2px 0 0 1px">0.1</div>
<div class="lbl" style="left:648.5px;top:338px">Cap:</div>
<div class="opt" style="left:811px;top:331px"><span class="t">H</span><span class="dv"></span><span class="tr"></span></div>
<div class="lbl" style="left:648.5px;top:395px">Orient link:</div>
<div class="opt" style="left:811px;top:388px"><span class="t">Sterics</span><span class="dv"></span><span class="tr"></span></div>
<div class="lbl" style="left:648.5px;top:418px">Random seed:</div>
<div class="abs" style="left:812px;top:419px;width:10px;height:10px;background:#4a6984;border:1px solid;border-color:#828282 #fff #fff #828282"></div>
<div class="btn" style="left:931px;top:741px;width:83px;height:26px;line-height:24px">Close</div>
<div class="btn" style="left:1034px;top:741px;width:83px;height:26px;line-height:24px">Generate</div>
</body></html>
